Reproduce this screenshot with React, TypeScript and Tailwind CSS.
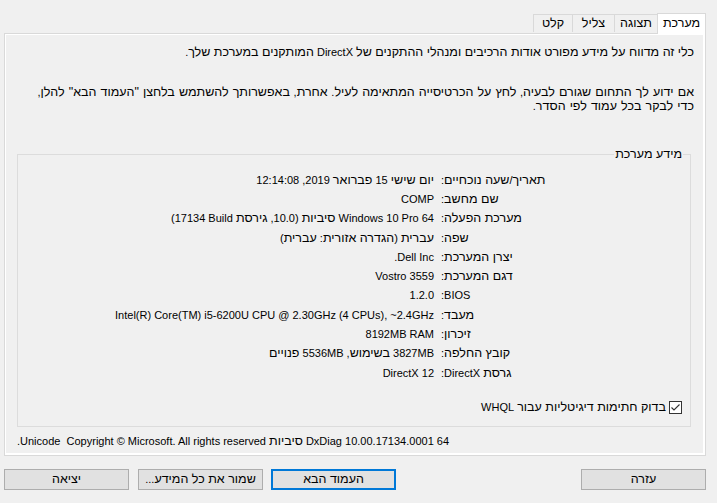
import React from 'react';

// Hebrew runs are set a bit larger than Latin runs to mimic Segoe UI's proportions
const HEB = /([\u0590-\u05FF]+(?:[ "]+[\u0590-\u05FF]+)*)/;

const T = ({ s }: { s: string }) => (
  <>
    {s.split(HEB).map((p, i) =>
      i % 2 ? (
        <span key={i} className="text-[12.5px]">
          {p}
        </span>
      ) : (
        p
      )
    )}
  </>
);

const rows: { label: string; value: string }[] = [
  { label: 'תאריך/שעה נוכחיים:', value: 'יום שישי 15 פברואר 2019, 12:14:08' },
  { label: 'שם מחשב:', value: 'COMP' },
  { label: 'מערכת הפעלה:', value: 'Windows 10 Pro 64 סיביות (10.0, גירסת Build\u200F 17134)' },
  { label: 'שפה:', value: 'עברית (הגדרה אזורית: עברית)' },
  { label: 'יצרן המערכת:', value: 'Dell Inc.' },
  { label: 'דגם המערכת:', value: 'Vostro 3559' },
  { label: 'BIOS:', value: '1.2.0' },
  { label: 'מעבד:', value: 'Intel(R) Core(TM) i5-6200U CPU @ 2.30GHz (4 CPUs), ~2.4GHz' },
  { label: 'זיכרון:', value: '8192MB RAM' },
  { label: 'קובץ החלפה:', value: '3827MB בשימוש, 5536MB פנויים' },
  { label: 'גרסת DirectX:', value: 'DirectX 12' },
];

const tabs = [
  { name: 'קלט', w: 'w-[40px]' },
  { name: 'צליל', w: 'w-[43px] -ml-px' },
  { name: 'תצוגה', w: 'w-[44px] -ml-px' },
];

const Button = ({ label, focused }: { label: string; focused?: boolean }) => (
  <button
    dir="rtl"
    className={`w-[125px] h-[21px] bg-[#e1e1e1] flex items-center justify-center leading-none ${
      focused ? 'border-2 border-[#0078d7]' : 'border border-[#adadad]'
    }`}
  >
    <T s={label} />
  </button>
);

export default function App() {
  return (
    <div
      className="w-[717px] h-[503px] bg-[#f0f0f0] text-black text-[11px] pt-[13px] overflow-hidden"
      style={{ fontFamily: '"Liberation Sans", "DejaVu Sans", sans-serif' }}
    >
      {/* tab strip */}
      <div className="ml-[4px] w-[702px] h-[21px] flex justify-end items-end">
        {tabs.map((t) => (
          <div
            key={t.name}
            dir="rtl"
            className={`${t.w} h-[18px] mb-[2px] border border-b-0 border-[#d9d9d9] bg-[#f0f0f0] flex items-center justify-center`}
          >
            <T s={t.name} />
          </div>
        ))}
        <div
          dir="rtl"
          className="w-[49px] h-[21px] -ml-px relative z-10 border border-b-0 border-[#d9d9d9] bg-white flex items-center justify-center pb-[1px]"
        >
          <T s="מערכת" />
        </div>
      </div>

      {/* tab page */}
      <div className="ml-[4px] w-[702px] h-[423px] -mt-px border border-[#d9d9d9]">
        <div className="h-full border-t border-l border-r-2 border-b-2 border-white flex flex-col pt-[10px]" dir="rtl">
          <p className="leading-[14px] pr-[9px]">
            <T s="כלי זה מדווח על מידע מפורט אודות הרכיבים ומנהלי ההתקנים של DirectX המותקנים במערכת שלך." />
          </p>
          <p className="leading-[14px] pr-[9px] mt-[26px] [word-spacing:0.6px]">
            <T s='אם ידוע לך התחום שגורם לבעיה, לחץ על הכרטיסייה המתאימה לעיל. אחרת, באפשרותך להשתמש בלחצן "העמוד הבא" להלן,' />
            <br />
            <T s="כדי לבקר בכל עמוד לפי הסדר." />
          </p>

          {/* group box */}
          <div className="relative mt-[41px] mr-[12px] ml-[11px] h-[273px] border border-[#dcdcdc] flex flex-col">
            <span className="absolute right-[7px] -top-[8px] bg-[#f0f0f0] px-[1px] leading-[14px]">
              <T s="מידע מערכת" />
            </span>
            <div className="pt-[15px] pr-[139px] flex flex-col">
              {rows.map((r) => (
                <div key={r.label} className="h-[19.3px] flex items-center gap-[7px] leading-[14px]">
                  <div className="w-[110px] shrink-0 text-left whitespace-nowrap">
                    <T s={r.label} />
                  </div>
                  <div className="flex-1 text-right whitespace-nowrap">
                    <T s={r.value} />
                  </div>
                </div>
              ))}
            </div>
            <div className="mt-[18px] pr-[8px] flex items-center gap-[3px] h-[14px]">
              <span className="w-[13px] h-[13px] border border-[#333333] bg-white flex items-center justify-center">
                <svg width="11" height="11" viewBox="0 0 11 11">
                  <path d="M1.5 5.5 L4 8 L9.5 2.5" fill="none" stroke="#333333" strokeWidth="1.1" />
                </svg>
              </span>
              <span className="leading-[14px]">
                <T s="בדוק חתימות דיגיטליות עבור WHQL" />
              </span>
            </div>
          </div>

          <p className="mt-[7px] ml-[11px] text-left leading-[14px] whitespace-pre">
            <T s="DxDiag 10.00.17134.0001 64 סיביות Unicode  Copyright © Microsoft. All rights reserved." />
          </p>
        </div>
      </div>

      {/* buttons */}
      <div className="ml-[4px] w-[702px] mt-[13px] flex justify-between">
        <div className="flex gap-[9px]">
          <Button label="יציאה" />
          <Button label="שמור את כל המידע..." />
          <div className="-ml-px">
            <Button label="העמוד הבא" focused />
          </div>
        </div>
        <Button label="עזרה" />
      </div>
    </div>
  );
}
